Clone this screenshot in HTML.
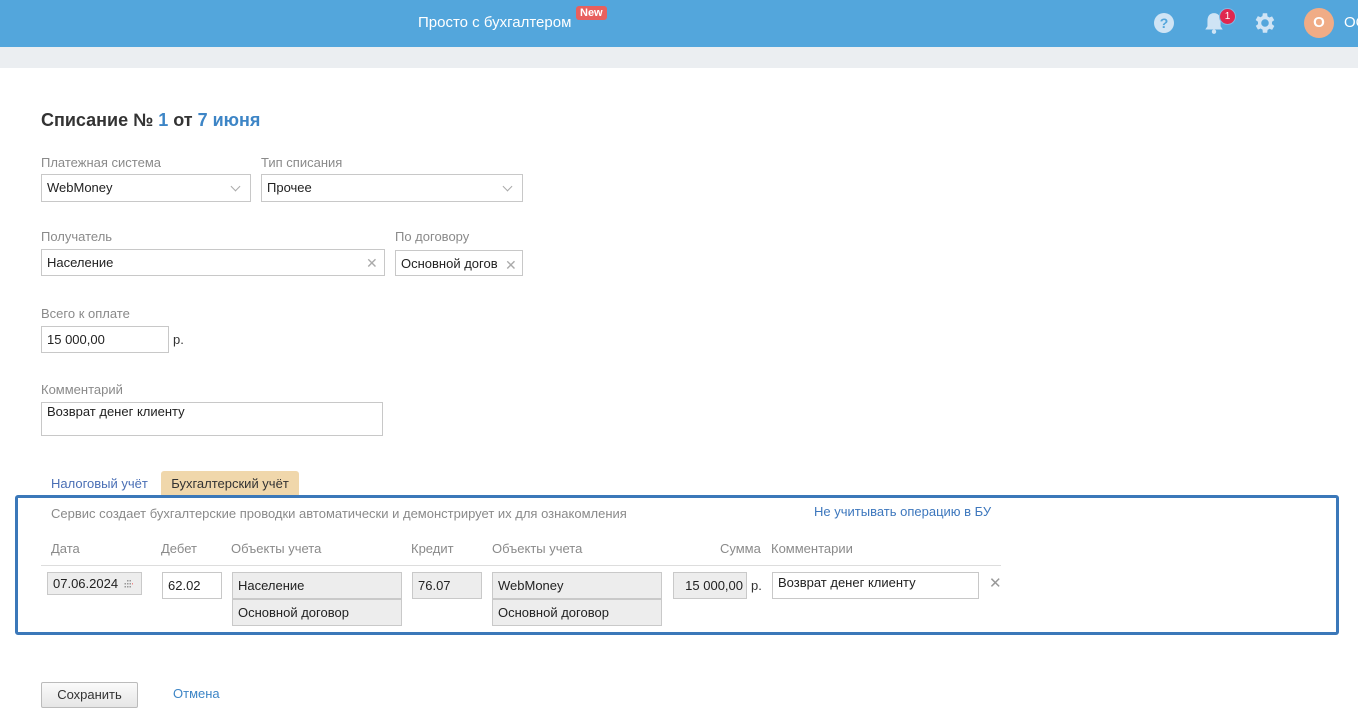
<!DOCTYPE html>
<html><head><meta charset="utf-8"><style>
*{box-sizing:border-box;margin:0;padding:0}
body{width:1358px;height:712px;overflow:hidden;background:#fff;font-family:"Liberation Sans",Arial,sans-serif;font-size:13px;color:#333;position:relative}
.a{position:absolute}
.hdr{left:0;top:0;width:1358px;height:47px;background:#53a6dc}
.band{left:0;top:47px;width:1358px;height:21px;background:#ebeef1}
.lbl{color:#8a8a8a;font-size:13px}
.inp{border:1px solid #c8c8c8;background:#fff;height:28px;padding:0 5px;line-height:26px;font-size:13px;color:#222}
.gray{background:#ededed;border-color:#c9c9c9}
.x{color:#aaa;font-size:14px}
.chev{width:7px;height:7px;border-right:1px solid #aaa;border-bottom:1px solid #aaa;transform:rotate(45deg)}
.th{color:#8a8a8a;font-size:13px;top:541px}
</style></head><body>
<div class="a hdr"></div>
<div class="a band"></div>
<div class="a" style="left:418px;top:14px;color:#fff;font-size:15px">Просто с бухгалтером</div>
<div class="a" style="left:576px;top:6px;background:#e8605e;color:#fff;font-size:11px;font-weight:bold;padding:1px 4px;border-radius:3px">New</div>
<svg class="a" style="left:1153px;top:12px" width="22" height="22" viewBox="0 0 22 22"><circle cx="11" cy="11" r="10" fill="#cfe4f5"/><text x="11" y="16" text-anchor="middle" font-family="Liberation Sans" font-weight="bold" font-size="14" fill="#53a6dc">?</text></svg>
<svg class="a" style="left:1202px;top:11px" width="24" height="24" viewBox="0 0 22 22"><path d="M11 2c-4 0-6 3-6 7v5l-2 3h16l-2-3V9c0-4-2-7-6-7z" fill="#cfe4f5"/><circle cx="11" cy="19" r="2" fill="#cfe4f5"/></svg>
<div class="a" style="left:1219px;top:8px;width:17px;height:17px;border-radius:50%;background:#e0274f;border:1px solid #7fb8e4;color:#fff;font-size:10px;text-align:center;line-height:15px">1</div>
<svg class="a" style="left:1252px;top:10px" width="26" height="26" viewBox="0 0 24 24"><path fill="#cfe4f5" d="M19.4 13a7.5 7.5 0 000-2l2.1-1.6-2-3.5-2.5 1a7 7 0 00-1.7-1L15 3h-4l-.4 2.7a7 7 0 00-1.7 1l-2.5-1-2 3.5L6.6 11a7.5 7.5 0 000 2l-2.1 1.6 2 3.5 2.5-1a7 7 0 001.7 1L11 21h4l.4-2.7a7 7 0 001.7-1l2.5 1 2-3.5zM13 15.5a3.5 3.5 0 110-7 3.5 3.5 0 010 7z" transform="translate(-1 0)"/></svg>
<div class="a" style="left:1304px;top:8px;width:30px;height:30px;border-radius:50%;background:#f0ac86;color:#fff;font-weight:bold;font-size:15px;text-align:center;line-height:30px">О</div>
<div class="a" style="left:1344px;top:14px;color:#fff;font-size:15px">ОО</div>

<div class="a" style="left:41px;top:110px;font-size:18px;font-weight:bold;color:#333">Списание № <span style="color:#3d85c6">1</span> от <span style="color:#3d85c6">7 июня</span></div>

<div class="a lbl" style="left:41px;top:155px">Платежная система</div>
<div class="a inp" style="left:41px;top:174px;width:210px">WebMoney</div>
<div class="a chev" style="left:232px;top:183px"></div>
<div class="a lbl" style="left:261px;top:155px">Тип списания</div>
<div class="a inp" style="left:261px;top:174px;width:262px">Прочее</div>
<div class="a chev" style="left:504px;top:183px"></div>

<div class="a lbl" style="left:41px;top:229px">Получатель</div>
<div class="a inp" style="left:41px;top:249px;width:344px;height:27px">Население</div>
<div class="a x" style="left:366px;top:255px">✕</div>
<div class="a lbl" style="left:395px;top:229px">По договору</div>
<div class="a inp" style="left:395px;top:250px;width:128px;height:26px;white-space:nowrap;overflow:hidden">Основной догов</div>
<div class="a x" style="left:503px;top:257px;background:#fff;padding-left:2px">✕</div>

<div class="a lbl" style="left:41px;top:306px">Всего к оплате</div>
<div class="a inp" style="left:41px;top:326px;width:128px;height:27px">15 000,00</div>
<div class="a" style="left:173px;top:332px">р.</div>

<div class="a lbl" style="left:41px;top:382px">Комментарий</div>
<div class="a inp" style="left:41px;top:402px;width:342px;height:34px;line-height:16px;padding-top:1px">Возврат денег клиенту</div>

<div class="a" style="left:51px;top:476px;color:#4a6fb5">Налоговый учёт</div>
<div class="a" style="left:161px;top:471px;width:138px;height:25px;background:#f0d7ab;border-radius:3px 3px 0 0;text-align:center;line-height:25px;color:#333">Бухгалтерский учёт</div>
<div class="a" style="left:15px;top:495px;width:1324px;height:140px;border:3px solid #3b78b9;border-radius:3px"></div>
<div class="a" style="left:51px;top:506px;color:#8a8a8a">Сервис создает бухгалтерские проводки автоматически и демонстрирует их для ознакомления</div>
<div class="a" style="left:814px;top:504px;color:#3d77bd">Не учитывать операцию в БУ</div>

<div class="a th" style="left:51px">Дата</div>
<div class="a th" style="left:161px">Дебет</div>
<div class="a th" style="left:231px">Объекты учета</div>
<div class="a th" style="left:411px">Кредит</div>
<div class="a th" style="left:492px">Объекты учета</div>
<div class="a th" style="left:720px">Сумма</div>
<div class="a th" style="left:771px">Комментарии</div>
<div class="a" style="left:41px;top:565px;width:960px;height:1px;background:#ddd"></div>

<div class="a inp gray" style="left:47px;top:572px;width:95px;height:23px;line-height:21px;padding-left:5px">07.06.2024</div>
<svg class="a" style="left:123px;top:580px" width="10" height="8" viewBox="0 0 10 8"><g fill="#999"><rect x="4" y="0" width="1.5" height="1.5"/><rect x="6.5" y="0" width="1.5" height="1.5"/><rect x="1.5" y="3" width="1.5" height="1.5"/><rect x="4" y="3" width="1.5" height="1.5"/><rect x="6.5" y="3" width="1.5" height="1.5"/><rect x="1.5" y="6" width="1.5" height="1.5"/><rect x="4" y="6" width="1.5" height="1.5"/><rect x="6.5" y="6" width="1.5" height="1.5"/><rect x="9" y="3" width="1" height="1.5" fill="#e88"/></g></svg>
<div class="a inp" style="left:162px;top:572px;width:60px;height:27px">62.02</div>
<div class="a inp gray" style="left:232px;top:572px;width:170px;height:27px">Население</div>
<div class="a inp gray" style="left:232px;top:599px;width:170px;height:27px">Основной договор</div>
<div class="a inp gray" style="left:412px;top:572px;width:70px;height:27px">76.07</div>
<div class="a inp gray" style="left:492px;top:572px;width:170px;height:27px">WebMoney</div>
<div class="a inp gray" style="left:492px;top:599px;width:170px;height:27px">Основной договор</div>
<div class="a inp gray" style="left:673px;top:572px;width:74px;height:27px;text-align:right;padding-right:3px">15 000,00</div>
<div class="a" style="left:751px;top:578px">р.</div>
<div class="a inp" style="left:772px;top:572px;width:207px;height:27px;line-height:20px">Возврат денег клиенту</div>
<div class="a" style="left:989px;top:574px;color:#999;font-size:15px">✕</div>

<div class="a" style="left:41px;top:682px;width:97px;height:26px;border:1px solid #bbb;border-radius:2px;background:linear-gradient(#fafafa,#e6e6e6);text-align:center;line-height:24px;color:#333">Сохранить</div>
<div class="a" style="left:173px;top:686px;color:#3d85c6">Отмена</div>
</body></html>
